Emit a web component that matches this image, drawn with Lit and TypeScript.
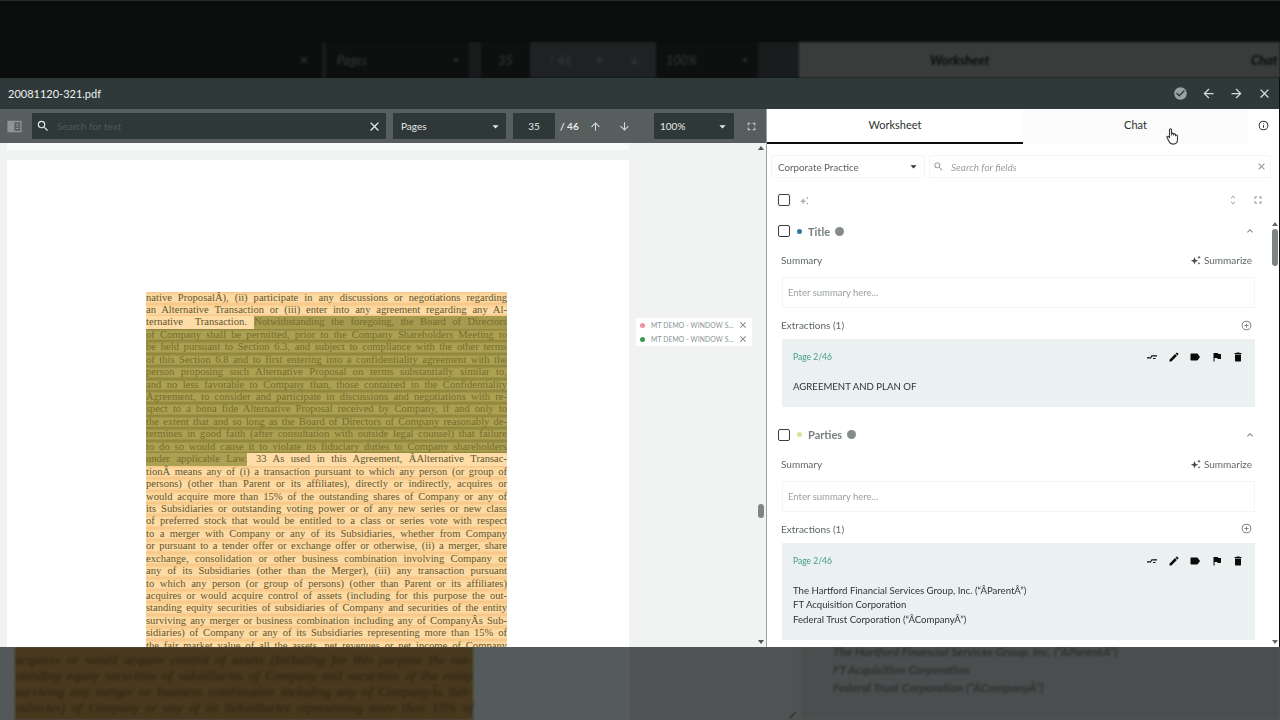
import { LitElement, html, css, svg } from "lit";
import { customElement } from "lit/decorators.js";

const P: Record<string, string> = {
  search: "M15.5 14h-.79l-.28-.27A6.47 6.47 0 0 0 16 9.5 6.5 6.5 0 1 0 9.5 16c1.61 0 3.09-.59 4.23-1.57l.27.28v.79l5 4.99L20.49 19l-4.99-5zm-6 0C7.01 14 5 11.99 5 9.5S7.01 5 9.5 5 14 7.01 14 9.5 11.99 14 9.5 14z",
  close: "M19 6.41L17.59 5 12 10.59 6.41 5 5 6.41 10.59 12 5 17.59 6.41 19 12 13.41 17.59 19 19 17.59 13.41 12z",
  up: "M4 12l1.41 1.41L11 7.83V20h2V7.83l5.58 5.59L20 12l-8-8-8 8z",
  down: "M20 12l-1.41-1.41L13 16.17V4h-2v12.17l-5.58-5.59L4 12l8 8 8-8z",
  back: "M20 11H7.83l5.59-5.59L12 4l-8 8 8 8 1.41-1.41L7.83 13H20v-2z",
  forward: "M12 4l-1.41 1.41L16.17 11H4v2h12.17l-5.58 5.59L12 20l8-8z",
  full: "M7 14H5v5h5v-2H7v-3zm-2-4h2V7h3V5H5v5zm12 7h-3v2h5v-5h-2v3zM14 5v2h3v3h2V5h-5z",
  check: "M12 2C6.48 2 2 6.48 2 12s4.48 10 10 10 10-4.48 10-10S17.52 2 12 2zm-2 15l-5-5 1.41-1.41L10 14.17l7.59-7.59L19 8l-9 9z",
  edit: "M3 17.25V21h3.75L17.81 9.94l-3.75-3.75L3 17.25zM20.71 7.04a1 1 0 0 0 0-1.41l-2.34-2.34a1 1 0 0 0-1.41 0l-1.83 1.83 3.75 3.75 1.83-1.83z",
  label: "M17.63 5.84C17.27 5.33 16.67 5 16 5L5 5.01C3.9 5.01 3 5.9 3 7v10c0 1.1.9 1.99 2 1.99L16 19c.67 0 1.27-.33 1.63-.84L22 12l-4.37-6.16z",
  flag: "M14.4 6L14 4H5v17h2v-7h5.6l.4 2h7V6z",
  trash: "M6 19c0 1.1.9 2 2 2h8c1.1 0 2-.9 2-2V7H6v12zM19 4h-3.5l-1-1h-5l-1 1H5v2h14V4z",
  less: "M12 8l-6 6 1.41 1.41L12 10.83l4.59 4.58L18 14z",
  split: "M2 15h8l2-4h10v-2.4H11l-2 4H2z M14 14h5v2h-5z",
  unfold: "M12 3l-4.5 5 1.2 1L12 5.5 15.300 9l1.200-1zM12 21l4.500-5-1.200-1L12 18.500 8.700 15l-1.200 1z",
  spark: "M9 6l2 5.500 5.500 2L11 15.500 9 21l-2-5.500-5.500-2L7 11.500zM18 3l1 2.500 2.500 1-2.500 1L18 10l-1-2.500-2.500-1 2.500-1zM18 16l.8 2 2 .8-2 .8-.8 2-.8-2-2-.8 2-.8z",
  drop: "M7 10l5 5 5-5z",
  panel: "M2 4h20v16H2zM12 6v12h8V6zM14 8h4v1.500h-4zM14 11h4v1.500h-4zM14 14h4v1.500h-4z",
};

const ic = (name: string, size: number, cls = "") => html`<svg class="ic ${cls}" width=${size} height=${size} viewBox="0 0 24 24" fill="currentColor">${svg`<path fill-rule="evenodd" d=${P[name]} />`}</svg>`;

const ringIcon = (size: number, cls: string, inner: "i" | "plus") => html`<svg class="ic ${cls}" width=${size} height=${size} viewBox="0 0 24 24" fill="none" stroke="currentColor" stroke-width="2.2">${svg`<circle cx="12" cy="12" r="9.5" />${inner === "i"
  ? svg`<path d="M12 7v1.800M12 11v6" />`
  : svg`<path d="M12 7.500v9M7.500 12h9" />`}`}</svg>`;

const LINES: [string, string?][] = [
  ["native ProposalÂ), (ii) participate in any discussions or negotiations regarding"],
  ["an Alternative Transaction or (iii) enter into any agreement regarding any Al-"],
  ["ternative Transaction.|Notwithstanding the foregoing, the Board of Directors", "s3"],
  ["of Company shall be permitted, prior to the Company Shareholders Meeting to", "ol"],
  ["be held pursuant to Section 6.3, and subject to compliance with the other terms", "ol"],
  ["of this Section 6.8 and to first entering into a confidentiality agreement with the", "ol"],
  ["person proposing such Alternative Proposal on terms substantially similar to,", "ol"],
  ["and no less favorable to Company than, those contained in the Confidentiality", "ol"],
  ["Agreement, to consider and participate in discussions and negotiations with re-", "ol"],
  ["spect to a bona fide Alternative Proposal received by Company, if and only to", "ol"],
  ["the extent that and so long as the Board of Directors of Company reasonably de-", "ol"],
  ["termines in good faith (after consultation with outside legal counsel) that failure", "ol"],
  ["to do so would cause it to violate its fiduciary duties to Company shareholders", "ol"],
  ["under applicable Law.|33 As used in this Agreement, ÂAlternative Transac-", "s14"],
  ["tionÂ means any of (i) a transaction pursuant to which any person (or group of"],
  ["persons) (other than Parent or its affiliates), directly or indirectly, acquires or"],
  ["would acquire more than 15% of the outstanding shares of Company or any of"],
  ["its Subsidiaries or outstanding voting power or of any new series or new class"],
  ["of preferred stock that would be entitled to a class or series vote with respect"],
  ["to a merger with Company or any of its Subsidiaries, whether from Company"],
  ["or pursuant to a tender offer or exchange offer or otherwise, (ii) a merger, share"],
  ["exchange, consolidation or other business combination involving Company or"],
  ["any of its Subsidiaries (other than the Merger), (iii) any transaction pursuant"],
  ["to which any person (or group of persons) (other than Parent or its affiliates)"],
  ["acquires or would acquire control of assets (including for this purpose the out-"],
  ["standing equity securities of subsidiaries of Company and securities of the entity"],
  ["surviving any merger or business combination including any of CompanyÂs Sub-"],
  ["sidiaries) of Company or any of its Subsidiaries representing more than 15% of"],
  ["the fair market value of all the assets, net revenues or net income of Company"],
];

const SECTIONS = [
  { name: "Title", dot: "blue", text: ["AGREEMENT AND PLAN OF"] },
  { name: "Parties", dot: "lime", text: ["The Hartford Financial Services Group, Inc. (“ÂParentÂ”)", "FT Acquisition Corporation", "Federal Trust Corporation (“ÂCompanyÂ”)"] },
];

@customElement("app-root")
export class AppRoot extends LitElement {
  static styles = css`
    :host { display: block; width: 1280px; height: 720px; overflow: hidden; position: relative; background: #0b0d0d; font-family: Lato, "Open Sans", sans-serif; }
    .ic { display: block; flex: none; }
    .top { height: 78px; display: flex; flex-direction: column; border-top: 1px solid #2a2c2c; box-sizing: border-box; }
    .top-space { height: 41px; }
    .ghost { flex: 1; display: flex; align-items: center; background: #191c1c; color: #34393a; font-size: 12.500px; font-style: italic; filter: blur(1.1px); }
    .g-a { width: 322px; margin-right: 4px; align-self: stretch; background: #0c0e0e; flex: none; display: flex; align-items: center; justify-content: flex-end; padding-right: 11px; box-sizing: border-box; }
    .g-pill { align-self: stretch; background: #0e1010; flex: none; display: flex; align-items: center; justify-content: space-between; box-sizing: border-box; }
    .g-pages { width: 143px; padding: 0 6px 0 11px; margin-right: 12px; }
    .g-num { width: 49px; justify-content: center; }
    .g-gray { width: 126px; flex: none; padding-left: 19px; box-sizing: border-box; display: flex; align-items: center; gap: 22px; background: #1f2222; align-self: stretch; }
    .g-gray .ic { color: #34393a; }
    .g-zoom { width: 102px; padding: 0 6px 0 10px; margin-right: 41px; }
    .g-panel { flex: 1; align-self: stretch; background: #3a3c3c; display: flex; color: #0b0b0b; font-size: 13px; font-weight: 700; align-items: center; }
    .g-ws { margin-left: 131px; width: 321px; flex: none; }

    .modal { height: 569px; width: 1279px; display: flex; flex-direction: column; filter: blur(0.4px); }
    .head { height: 31px; flex: none; display: flex; align-items: center; background: #2f3939; color: #eef1f1; padding: 0 8px; font-size: 11px; }
    .head-name { flex: 1; }
    .head-acts { display: flex; align-items: center; gap: 13px; margin-right: -1px; color: #d5dada; }
    .head-acts .chk { color: #9aa2a2; }
    .main { flex: 1; min-height: 0; display: flex; }

    .left { width: 767px; flex: none; display: flex; flex-direction: column; border-right: 1px solid #9aa0a0; box-sizing: border-box; }
    .bar { height: 34px; flex: none; box-sizing: border-box; background: #575e5e; display: flex; align-items: center; color: #e6eaea; font-size: 10px; }
    .side { margin: 0 3px 0 6px; color: #8e9595; width: 17px; }
    .pill { height: 26px; background: #2f3838; border-radius: 1px; display: flex; align-items: center; box-sizing: border-box; }
    .p-search { width: 354px; margin-left: 6px; padding: 0 4px 0 4px; color: #e6eaea; }
    .p-search .ph { flex: 1; color: #4e5959; margin-left: 7px; font-size: 10px; }
    .p-pages { width: 113px; margin-left: 7px; padding: 0 3px 0 8px; justify-content: space-between; }
    .p-num { width: 42px; margin-left: 7px; justify-content: center; }
    .count { margin-left: 5px; width: 20px; font-weight: 700; flex: none; }
    .arrow { color: #d5dada; }
    .a-up { margin-left: 8.500px; }
    .a-down { margin-left: 16px; }
    .p-zoom { width: 80px; margin-left: 23.500px; padding: 0 4px 0 6px; justify-content: space-between; flex: none; }
    .b-full { margin-left: 10.500px; color: #c9cfcf; }

    .pdf { flex: 1; min-height: 0; display: flex; background: #f1f2f2; overflow: hidden; }
    .page-wrap { width: 622px; margin-left: 7px; flex: none; border-top: 7px solid #f9fbfb; padding-top: 10px; box-sizing: border-box; }
    .page { height: 100%; background: #fff; padding: 131.500px 122px 0 139px; box-sizing: border-box; overflow: hidden; }
    .ln { height: 12.450px; line-height: 12.450px; width: 361px; font-family: "Liberation Serif", serif; font-size: 10.600px; white-space: nowrap; text-align: justify; text-align-last: justify; color: #64552b;
      background: linear-gradient(180deg, #f7c585 0, #fcd99f 25%, #fddca8 75%, #f7c585 100%); }
    .ol { color: #776d2c; background: linear-gradient(180deg, #8b8338 0, #aca052 22%, #aca052 80%, #8b8338 100%); }
    .s3, .s14 { display: flex; background: #fddca8; }
    .seg { display: block; flex: none; text-align: justify; text-align-last: justify; white-space: nowrap; height: 100%; }
    .s3 .seg:first-child { width: 101px; padding-right: 7px; color: #64552b; }
    .s3 .seg:last-child { width: 253px; color: #776d2c; background: #a59a4e; }
    .s14 .seg:first-child { width: 101px; color: #776d2c; background: #aca052; }
    .s14 .seg:last-child { width: 251px; margin-left: 9px; color: #64552b; }

    .notes { width: 116px; margin: 175px 0 0 7px; height: 28px; background: #fff; flex: none; display: flex; flex-direction: column; justify-content: center; gap: 1px; }
    .note { height: 13px; display: flex; align-items: center; font-size: 6.800px; color: #8b9393; padding: 0 4px; letter-spacing: .1px; }
    .note i { width: 5px; height: 5px; border-radius: 50%; margin-right: 6px; flex: none; }
    .note span { flex: 1; white-space: nowrap; }
    .note .ic { color: #6d7474; }
    .pink { background: #ef8f9f; }
    .green { background: #3a9a52; }

    .vbar { width: 11px; margin-left: 3px; flex: none; display: flex; flex-direction: column; align-items: center; justify-content: space-between; color: #555; padding: 3px 0; box-sizing: border-box; }
    .tri-u { width: 0; height: 0; border: 3px solid transparent; border-bottom: 4px solid currentColor; border-top: 0; }
    .tri-d { width: 0; height: 0; border: 3px solid transparent; border-top: 4px solid currentColor; border-bottom: 0; }
    .thumb-a { width: 6px; height: 14px; border-radius: 3px; background: #7f8484; margin-top: 354px; margin-bottom: auto; }

    .right { flex: 1; min-width: 0; background: #fff; display: flex; flex-direction: column; color: #3e4646; }
    .tabs { height: 35px; flex: none; display: flex; }
    .tab { display: flex; align-items: center; justify-content: center; font-size: 11px; color: #2c3232; box-sizing: border-box; padding-bottom: 3px; }
    .t-ws { width: 256px; border-bottom: 2.500px solid #0d0d0d; }
    .t-chat { width: 225px; background: #fbfbfb; padding-bottom: 5px; }
    .t-info { flex: 1; color: #333; }
    .filters { flex: none; display: flex; margin: 11px 8px 0 4px; gap: 4px; height: 23px; }
    .f { border: 1px solid #f4f5f5; display: flex; align-items: center; box-sizing: border-box; font-size: 9.800px; color: #5d6565; }
    .f-sel { width: 154px; padding: 0 3px 0 6px; justify-content: space-between; color: #5a6262; }
    .f-sel .ic { color: #333; }
    .f-search { flex: 1; padding: 0 3px 0 3px; color: #8c9494; }
    .f-search span { flex: 1; margin-left: 7px; font-style: italic; color: #9aa0a0; font-size: 10px; }
    .tools { flex: none; height: 22px; margin-top: 11px; display: flex; align-items: center; padding: 0 15px 0 11px; color: #a9afaf; }
    .cb { width: 10px; height: 10px; border: 1.600px solid #3a3d3d; border-radius: 2px; flex: none; box-sizing: content-box; }
    .tools .spark { margin-left: 9px; }
    .tools .unf { margin-left: auto; color: #9aa0a0; }
    .tools .ful { margin-left: 13px; color: #8e9595; }

    .scroll { flex: 1; min-height: 0; display: flex; margin-top: 9px; }
    .list { width: 503px; flex: none; padding-left: 15px; box-sizing: border-box; overflow: hidden; }
    .sec { width: 473px; margin-bottom: 17px; }
    .sec-head { height: 22px; margin-left: -4px; display: flex; align-items: center; font-size: 11px; font-weight: 700; color: #767e7e; }
    .dot { width: 5px; height: 5px; border-radius: 50%; margin: 0 6px 0 7px; }
    .blue { background: #35779c; }
    .lime { background: #d9e39b; }
    .badge { width: 9px; height: 9px; background: #858b8b; border-radius: 50%; margin-left: 5px; }
    .sec-head .chev { margin-left: auto; color: #7e8585; margin-right: -1px; }
    .row { height: 20px; margin-top: 8px; margin-left: -1px; display: flex; align-items: center; justify-content: space-between; font-size: 10px; color: #5f6767; }
    .row + .input { margin-top: 7px; }
    .sumz { display: flex; align-items: center; gap: 2px; margin-right: 3px; color: #5f6767; }
    .sumz .ic { color: #444; }
    .input { height: 31px; border: 1px solid #f3f4f4; box-sizing: border-box; display: flex; align-items: center; padding-left: 5px; font-size: 9.500px; color: #9aa0a0; }
    .input + .row { margin-top: 7px; }
    .add { color: #7e8585; margin-right: 3px; }
    .card { margin-top: 4px; background: #ebf0f0; padding: 10px 11px 12px; box-sizing: border-box; }
    .card-head { height: 16px; display: flex; align-items: center; justify-content: space-between; }
    .pg { font-size: 8.500px; color: #3f9c8a; }
    .acts { display: flex; gap: 9.500px; color: #0c0c0c; }
    .body { margin-top: 15px; font-size: 9.600px; line-height: 14.700px; color: #2f3535; }

    .sb { flex: 1; display: flex; flex-direction: column; align-items: center; color: #666; padding: 2px 0 3px; box-sizing: border-box; }
    .thumb-b { width: 6px; height: 37px; background: #7f8484; border-radius: 3px; margin: 3px 0 auto; }

    .bottom { height: 73px; display: flex; background: #555859; overflow: hidden; }
    .b-doc { width: 458px; margin-left: 15px; flex: none; background: #47381e; padding-top: 5px; box-sizing: border-box; filter: blur(1.100px); }
    .b-ln { height: 16px; line-height: 16px; font-family: "Liberation Serif", serif; font-style: italic; font-size: 13.300px; color: #2e2511; white-space: nowrap; text-align: justify; text-align-last: justify; }
    .b-mid { width: 327px; flex: none; background: linear-gradient(90deg, #555a5a 0 157px, #505353 157px); display: flex; justify-content: flex-end; align-items: flex-end; color: #3d3f3f; padding-right: 2px; box-sizing: border-box; }
    .b-right { flex: 1; background: #4c4d4e; padding: 0 0 0 33px; font-size: 12.200px; font-weight: 700; font-style: italic; color: #2f3030; line-height: 18px; filter: blur(1.200px); white-space: nowrap; }
    .b-right-in { margin-top: -4px; }

    .hand { position: absolute; left: 1166px; top: 128px; }
  `;

  private section(s: (typeof SECTIONS)[number]) {
    return html`<div class="sec">
      <div class="sec-head">
        <span class="cb"></span><span class="dot ${s.dot}"></span><span>${s.name}</span><span class="badge"></span>
        ${ic("less", 12, "chev")}
      </div>
      <div class="row"><span>Summary</span><span class="sumz">${ic("spark", 12)}Summarize</span></div>
      <div class="input">Enter summary here...</div>
      <div class="row"><span>Extractions (1)</span>${ringIcon(11, "add", "plus")}</div>
      <div class="card">
        <div class="card-head">
          <span class="pg">Page 2/46</span>
          <span class="acts">${ic("split", 12)}${ic("edit", 12)}${ic("label", 12)}${ic("flag", 12)}${ic("trash", 12)}</span>
        </div>
        <div class="body">${s.text.map((t) => html`<div>${t}</div>`)}</div>
      </div>
    </div>`;
  }

  private line([t, c]: [string, string?]) {
    const parts = t.split("|");
    return html`<div class="ln ${c ?? ""}">${parts.length > 1 ? parts.map((p) => html`<span class="seg">${p}</span>`) : t}</div>`;
  }

  render() {
    return html`
      <div class="top">
        <div class="top-space"></div>
        <div class="ghost">
          <div class="g-a">${ic("close", 14)}</div>
          <div class="g-pill g-pages"><span>Pages</span>${ic("drop", 14)}</div>
          <div class="g-pill g-num">35</div>
          <div class="g-gray"><span>/ 46</span>${ic("up", 13)}${ic("down", 13)}</div>
          <div class="g-pill g-zoom"><span>100%</span>${ic("drop", 14)}</div>
          <div class="g-panel"><span class="g-ws">Worksheet</span><span>Chat</span></div>
        </div>
      </div>
      <div class="modal">
        <div class="head">
          <span class="head-name">20081120-321.pdf</span>
          <span class="head-acts">${ic("check", 15, "chk")}${ic("back", 15)}${ic("forward", 15)}${ic("close", 15)}</span>
        </div>
        <div class="main">
          <div class="left">
            <div class="bar">
              ${ic("panel", 17, "side")}
              <div class="pill p-search">${ic("search", 14)}<span class="ph">Search for text</span>${ic("close", 15)}</div>
              <div class="pill p-pages"><span>Pages</span>${ic("drop", 15)}</div>
              <div class="pill p-num">35</div>
              <span class="count">/ 46</span>
              ${ic("up", 13, "arrow a-up")}${ic("down", 13, "arrow a-down")}
              <div class="pill p-zoom"><span>100%</span>${ic("drop", 15)}</div>
              ${ic("full", 13, "b-full")}
            </div>
            <div class="pdf">
              <div class="page-wrap">
                <div class="page">${LINES.map((l) => this.line(l))}</div>
              </div>
              <div class="notes">
                <div class="note"><i class="pink"></i><span>MT DEMO - WINDOW S...</span>${ic("close", 10)}</div>
                <div class="note"><i class="green"></i><span>MT DEMO - WINDOW S...</span>${ic("close", 10)}</div>
              </div>
              <div class="vbar"><div class="tri-u"></div><div class="thumb-a"></div><div class="tri-d"></div></div>
            </div>
          </div>
          <div class="right">
            <div class="tabs">
              <div class="tab t-ws">Worksheet</div>
              <div class="tab t-chat">Chat</div>
              <div class="tab t-info">${ringIcon(11, "", "i")}</div>
            </div>
            <div class="filters">
              <div class="f f-sel"><span>Corporate Practice</span>${ic("drop", 15)}</div>
              <div class="f f-search">${ic("search", 11)}<span>Search for fields</span>${ic("close", 11)}</div>
            </div>
            <div class="tools">
              <span class="cb"></span>${ic("spark", 11, "spark")}
              ${ic("unfold", 12, "unf")}${ic("full", 12, "ful")}
            </div>
            <div class="scroll">
              <div class="list">${SECTIONS.map((s) => this.section(s))}</div>
              <div class="sb"><div class="tri-u"></div><div class="thumb-b"></div><div class="tri-d"></div></div>
            </div>
          </div>
        </div>
      </div>
      <div class="bottom">
        <div class="b-doc">
          <div class="b-ln">acquires or would acquire control of assets (including for this purpose the out-</div>
          <div class="b-ln">standing equity securities of subsidiaries of Company and securities of the entity</div>
          <div class="b-ln">surviving any merger or business combination including any of CompanyÂs Sub-</div>
          <div class="b-ln">sidiaries) of Company or any of its Subsidiaries representing more than 15% of</div>
        </div>
        <div class="b-mid">${ic("edit", 10)}</div>
        <div class="b-right"><div class="b-right-in">
          <div>The Hartford Financial Services Group, Inc. (“ÂParentÂ”)</div>
          <div>FT Acquisition Corporation</div>
          <div>Federal Trust Corporation (“ÂCompanyÂ”)</div>
        </div></div>
      </div>
      <svg class="hand" width="13" height="18" viewBox="0 0 13 18" fill="#fff" stroke="#3a3a3a" stroke-width="1.100" stroke-linejoin="round">
        <path d="M3.500 1.800c0-1.300 2-1.300 2 0v5.200l.2-1.200c.2-1 1.800-.9 1.800.2v1l.2-.6c.3-.9 1.800-.7 1.800.4v1l.2-.4c.4-.8 1.800-.5 1.800.5v3.600c0 2.700-1.500 4.600-4.200 4.600-2.300 0-3.400-1-4.300-2.700L1 9.600c-.5-1 .8-1.900 1.600-1l.9 1.100z"/>
      </svg>
    `;
  }
}
